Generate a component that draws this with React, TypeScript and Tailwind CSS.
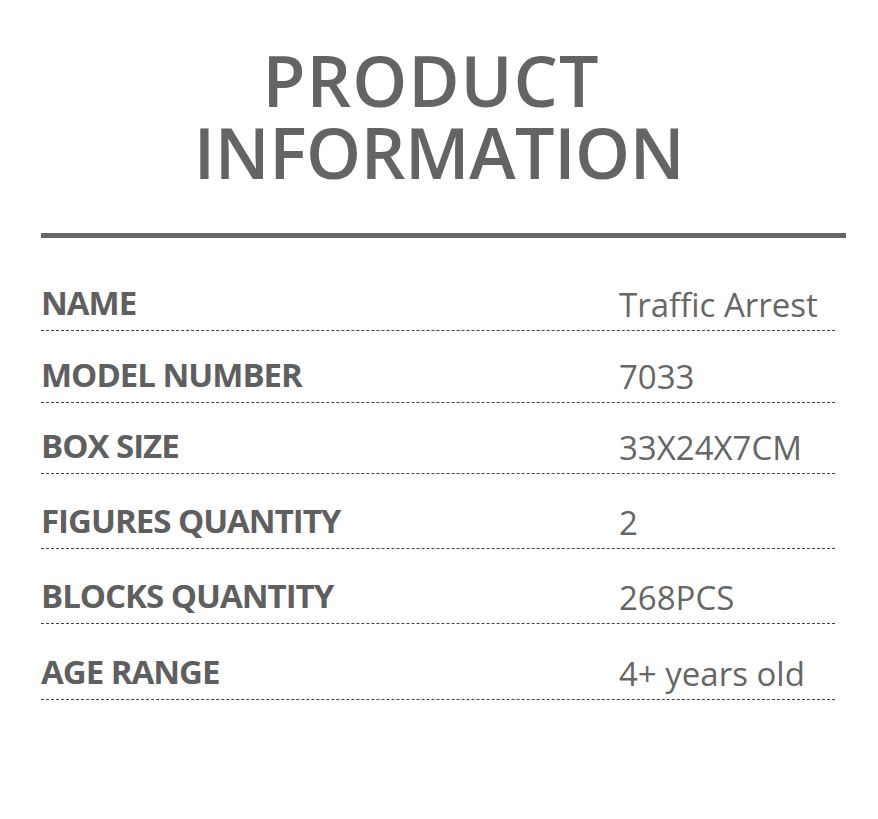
import React from "react";

const rows: { label: string; value: string; h: string }[] = [
  { label: "NAME", value: "Traffic Arrest", h: "h-[93px]" },
  { label: "MODEL NUMBER", value: "7033", h: "h-[72px]" },
  { label: "BOX SIZE", value: "33X24X7CM", h: "h-[71px]" },
  { label: "FIGURES QUANTITY", value: "2", h: "h-[75px]" },
  { label: "BLOCKS QUANTITY", value: "268PCS", h: "h-[75px]" },
  { label: "AGE RANGE", value: "4+ years old", h: "h-[76px]" },
];

export default function App() {
  return (
    <div className="w-[878px] h-[819px] bg-white text-[#666] overflow-hidden" style={{ fontFamily: '"Open Sans", sans-serif' }}>
      <div className="pt-[44px] flex flex-col items-center">
        <div className="text-[70px] leading-[72px] font-semibold tracking-[1px] text-[#646464] pr-[16px]">PRODUCT</div>
        <div className="text-[70px] leading-[72px] font-semibold tracking-[-0.4px] text-[#646464]">INFORMATION</div>
      </div>
      <div className="mt-[45px] ml-[41px] w-[805px] h-[5px] bg-[#666]" />
      <div className="ml-[41px] w-[794px]">
        {rows.map((r) => (
          <div key={r.label} className={`${r.h} flex items-end border-b border-dashed border-[#444]`}>
            <div className="flex-1 pb-[11px] text-[33px] leading-none font-bold tracking-[-1px] text-[#5f5f5f]">{r.label}</div>
            <div className="w-[216px] pb-[9px] text-[33px] leading-none font-normal text-[#666]">{r.value}</div>
          </div>
        ))}
      </div>
    </div>
  );
}
